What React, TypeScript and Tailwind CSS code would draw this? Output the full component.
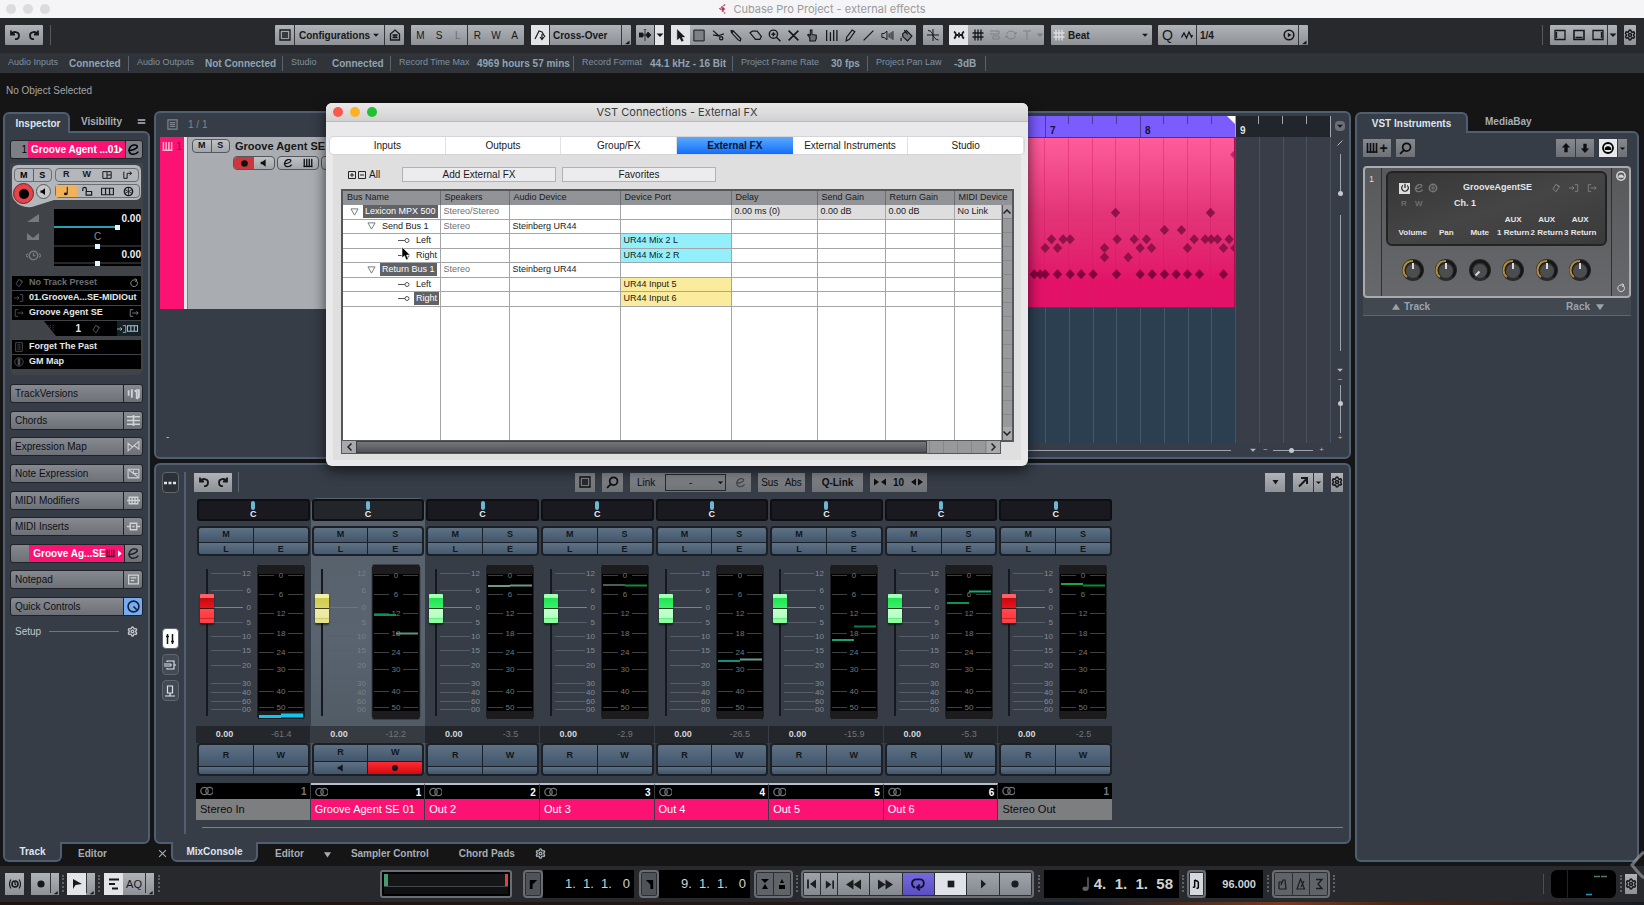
import React, { useState } from "react";
import type { ReactNode } from "react";
import { Settings } from "lucide-react";

const ICONS: Record<string, ReactNode> = {
  undo: <path d="M2 1.5v4h4M2.3 5.3C3.8 2 10 2.2 10 6.4 10 8.8 8.2 10.2 6 10.2" strokeWidth="1.8" />,
  redo: <path d="M10 1.5v4H6M9.7 5.3C8.2 2 2 2.2 2 6.4 2 8.8 3.8 10.2 6 10.2" strokeWidth="1.8" />,
  list: <path d="M1 1h10v10H1zM3 4h6M3 6h6M3 8h6" strokeWidth="1.3" />,
  house: <path d="M1.5 11V5L6 1l4.500 4v6zM3.500 6h5M3.500 8.500h5M5 6v3M7 6v3" strokeWidth="1.3" />,
  node: <path d="M1 10L5 2l3 1 3 5M8 5v5M6 8l2 2.500 2-2.500" strokeWidth="1.2" />,
  scroll: <path d="M0 4h4v4H0zM9 3l3 3-3 3-2-3zM6 0v12M4.500 0h3M0 6h10" fill="currentColor" strokeWidth="0.8" />,
  arrow: <path d="M3 .5v9.500l2.300-2 1.700 3.500 1.700-.8L7 7.300h3z" fill="currentColor" strokeWidth="0.3" />,
  range: <path d="M.8 1h9.500v10H.8z" fill="#7d8085" strokeWidth="0.9" />,
  split: <path d="M1 1.500l5.500 5M1 5.500l6 1M7 8.500a1.500 1.500 0 103 0 1.500 1.500 0 10-3 0M6.500 6L11 4.500" strokeWidth="1.2" />,
  glue: <path d="M1 1.500l2 .2 7 7.300-.5 2L7.500 10 1.500 3.500zM3 1.700L2 3.700" strokeWidth="1.1" />,
  erase: <path d="M1 3.500L3 2h4.500l4 5-1.500 2.500H6z" strokeWidth="1.1" />,
  zoom: <path d="M5 1a3.800 3.800 0 100 7.600A3.800 3.800 0 005 1M8 7.800l3.500 3.500M5 3v3.600M3.200 4.800h3.600" strokeWidth="1.3" />,
  mute: <path d="M1.500 1.500l9 9M10.500 1.500l-9 9" strokeWidth="1.500" />,
  hand: <path d="M3.500 11V8L1.500 5.500l1-.6L4 6V1h1.500v4l4 .8v3L8.500 11z" fill="#6b6e72" strokeWidth="1" />,
  comp: <path d="M1.500 1v10M5 3v8M8 1v10M11 1v10" strokeWidth="1.200" />,
  pencil: <path d="M2 11l.5-3.500L7.500 1l2.500 1.500-5 7z" strokeWidth="1.100" />,
  line: <path d="M1.500 10.500l9-9" strokeWidth="1.100" />,
  play: <path d="M.8 4.200h2L5.500 2v8L2.800 7.800h-2zM7.500 4v4M9.300 3v6M11 2v8" strokeWidth="0.9" />,
  bucket: <path d="M2.500 4.500L6 1.500l5 5-4 4.500-4.500-4zM1 8v3M4 1l3 4" fill="#777a7e" strokeWidth="1.100" />,
  cross: <path d="M6 0v12M0 6h12M1 1.500c3 0 4 2 5 4.500s2 4.500 5.500 5" strokeWidth="1" />,
  snap: <path d="M1 2.500C3.500 4 3.500 8 1 9.500M11 2.500C8.500 4 8.500 8 11 9.500M3 6h2M7 6h2M6 3.500v5" strokeWidth="1.800" />,
  grid: <path d="M3 .5v11M6 .5v11M9 .5v11M.5 4h11M.5 8h11" strokeWidth="1.300" />,
  ghost1: <path d="M1 2h9v3H1M4 7h6v3H4z" />,
  ghost2: <path d="M10.500 5C9 1 3 1 1.500 5M1.500 7c1.500 4 7.500 4 9 0M9 5h2V3M3 7H1v2" />,
  ghost3: <path d="M6 2v9M2 2h8" />,
  iterQ: <path d="M.5 8.500L3 4l2.500 5L8 3l2.500 5 1-2" strokeWidth="1.300" />,
  circPlay: <><circle cx="6" cy="6" r="4.800" strokeWidth="1.600" /><path d="M4.800 3.800v4.400L8.500 6z" fill="currentColor" strokeWidth="0" /></>,
  zoneL: <path d="M1 1.500h10v9H1zM2.500 3v6" strokeWidth="1.300" />,
  zoneB: <path d="M1 1.500h10v9H1zM2.500 8.500h7" strokeWidth="1.600" />,
  zoneR: <path d="M1 1.500h10v9H1zM9.500 3v6" strokeWidth="1.300" />,
  search: <path d="M7 1.200a3.600 3.600 0 100 7.200 3.600 3.600 0 000-7.200M4.500 7.500L1 11" strokeWidth="1.600" />,
  e: <path d="M1 6.800C4 7 9.500 5.500 9.500 3.300 9.500.8 2.500 1 2 6.500c-.3 5 6 5 8.500 1.500" strokeWidth="1.400" />,
  speaker: <path d="M2 4.500h2L8 1.500v9L4 7.500H2z" fill="currentColor" strokeWidth="0" />,
  dot: <circle cx="6" cy="6" r="3.600" fill="currentColor" strokeWidth="0" />,
  down: <path d="M2.500 4.500h7L6 8z" fill="currentColor" strokeWidth="0" />,
  up: <path d="M0 10h12L6 1z" fill="currentColor" strokeWidth="0" />,
  bigDown: <path d="M0 2h12L6 11z" fill="currentColor" strokeWidth="0" />,
  corner: <path d="M10 6v5H4z" fill="currentColor" strokeWidth="0" />,
  right: <path d="M4 1.500v9L9 6z" fill="currentColor" strokeWidth="0" />,
  keys: <path d="M1.500 1v10M4.500 1v10M7.500 1v10M10.500 1v10M.5 10h11" strokeWidth="1.600" />,
  lanes: <path d="M1 2h10v8H1zM6 2v8M6 6h5" strokeWidth="1.200" />,
  route: <path d="M1 2v8h4V4h5M8 2l2.500 2L8 6" strokeWidth="1.200" />,
  note: <path d="M6.500 1v8a2 1.700 0 11-2-1.500" strokeWidth="1.300" fill="none" />,
  noteFill: <><path d="M7.500 1v8.500" strokeWidth="1.200" /><ellipse cx="5.600" cy="9.500" rx="2.200" ry="1.700" fill="currentColor" strokeWidth="0" /></>,
  lock: <path d="M.8 5.500V3.500a2 2 0 014 0V6M4.500 6h6v4h-6z" strokeWidth="1.300" fill="none" />,
  boxes: <path d="M.5 3h11v6H.5zM4.200 3v6M7.900 3v6" strokeWidth="1.100" />,
  freeze: <><circle cx="6" cy="6" r="4.500" strokeWidth="1.600" /><path d="M6 1.500v9M2 3.800l8 4.400M10 3.800L2 8.200" strokeWidth="0.900" /></>,
  ramp: <path d="M0 10h12V2z" fill="currentColor" strokeWidth="0" />,
  pan: <path d="M0 10V3l6 5 6-5v7z" fill="currentColor" strokeWidth="0" />,
  clock: <><circle cx="6" cy="6" r="3.400" strokeWidth="1.200" /><path d="M6 4v2h1.500M1.500 4.500L0 6l1.500 1.500M10.500 4.500L12 6l-1.500 1.500" /></>,
  diamond: <path d="M6 1.500L9.500 5 6 10.500 2.500 7zM8 2l2.500 3" strokeWidth="1.100" />,
  inIcon: <path d="M0 6h6M4 4l2 2-2 2M7 2h3.500v8H7" />,
  outIcon: <path d="M5 2H1.500v8H5M4 6h7M9 4l2 2-2 2" />,
  reload: <path d="M9 3.500a4 4 0 11-3-1.200h3M7.500.5L9.500 2.500 7.500 4.500" strokeWidth="1.200" />,
  prog: <path d="M2 2h1M5.500 2h1M9 2h1M2 5h1M5.500 5h1M9 5h1M2 8h1M5.500 8h1M9 8h1" strokeWidth="1.600" />,
  doc: <path d="M2 .8h8v10.400H2zM4 3.500h4M4 6h4M4 8.500h4" />,
  mapIcon: <><circle cx="6" cy="6" r="5" /><path d="M5 2.500h2v7H5z" fill="currentColor" /></>,
  versions: <path d="M1.500 3v5M4.500 2v8M7 4l2-1v8M11 2v7L9 11" strokeWidth="1.700" />,
  chords: <path d="M0 2.500h12M0 6h12M0 9.500h12M6 1v10" strokeWidth="1.500" />,
  expr: <path d="M1 3v7l4-3.500zM11 1.500v7L6.500 5zM5 6.500L7 5" strokeWidth="1" />,
  noteExpr: <path d="M1 2h10v8H1zM2 3l8 6M6 3v3h4" strokeWidth="1" />,
  mod: <path d="M2 3h8v6H2zM0 6h12M4.700 3v6M7.400 3v6" strokeWidth="1.200" />,
  insert: <path d="M3 3h6v6H3zM0 6h3M9 6h3M5 6h2" strokeWidth="1.300" />,
  pad: <path d="M1.500 2h9v8h-9zM3.500 4.500h5M3.500 7h3" strokeWidth="1.200" />,
  knob: <><circle cx="6" cy="6" r="5" strokeWidth="1.500" /><path d="M6 6l3 3" strokeWidth="1.500" /></>,
  dots3: <path d="M0 6h3M4.500 6h3M9 6h3" strokeWidth="2.600" />,
  faders: <path d="M3.500 1v10M8.500 1v10M2 3.500h3M7 8.500h3" strokeWidth="1.500" />,
  channel: <path d="M3 3V2h7v8H3V9M0 5h7M0 7h7M7 5v2M10 6h2" strokeWidth="1.100" />,
  monitor: <path d="M3.500 1h5v7h-5zM6 8v3M1 11h10" strokeWidth="1.200" />,
  rings: <><circle cx="4.500" cy="6" r="3.700" strokeWidth="1.300" /><circle cx="9.500" cy="6" r="3.700" strokeWidth="1.300" /></>,
  outLeft: <path d="M0 2.500v7L5 6zM12 2.500v7L7 6z" fill="currentColor" strokeWidth="0" />,
  inOut: <path d="M5 2.500v7L0 6zM7 2.500v7L12 6z" fill="currentColor" strokeWidth="0" />,
  ne: <path d="M2 10.500l7-7M4 2h6v6" strokeWidth="2" />,
  arrowUp: <path d="M6 0l5 5.500H8V11H4V5.500H1z" fill="currentColor" strokeWidth="0" />,
  arrowDown: <path d="M6 12L1 6.500h3V1h4v5.500h3z" fill="currentColor" strokeWidth="0" />,
  dome: <><circle cx="6" cy="6" r="5" strokeWidth="1.800" /><path d="M3 7.500a3 2.800 0 016 0z" fill="currentColor" /></>,
  power: <path d="M6 1v5M3.500 2.800a4 4 0 105 0" strokeWidth="1.400" />,
  slash: <path d="M1 11L11 1" strokeWidth="2" />,
  equal: <path d="M1 4h10M1 8h10" strokeWidth="2" />,
  stretch: <path d="M1 1.500h10M1 6h6M4 10.500h6" strokeWidth="2.200" />,
  wedge: <path d="M2 1v10L4.500 7 11 6z" fill="currentColor" strokeWidth="0" />,
  meterClock: <><circle cx="6" cy="6" r="3" strokeWidth="1.600" /><path d="M2 1.500C0 4 0 8 2 10.500M10 1.500c2 2.500 2 6.500 0 9M6 4v2l1 1" strokeWidth="1.200" /></>,
  locL: <path d="M2 1h8L5 6v5H2z" fill="currentColor" strokeWidth="0" />,
  locR: <path d="M10 1H2l5 5v5h3z" fill="currentColor" strokeWidth="0" />,
  punchA: <path d="M2 1h8L6 5zM6 6l3 5H3z" fill="currentColor" strokeWidth="0" />,
  punchB: <path d="M6 1l2 4H4zM3 7h6v4H3z" fill="currentColor" strokeWidth="0" />,
  toStart: <path d="M2 1.500v9" strokeWidth="2" />,
  prev: <><path d="M2 1.500v9" strokeWidth="1.800" /><path d="M10 1.500v9L4 6z" fill="currentColor" strokeWidth="0" /></>,
  next: <><path d="M10 1.500v9" strokeWidth="1.800" /><path d="M2 1.500v9L8 6z" fill="currentColor" strokeWidth="0" /></>,
  rew: <path d="M6 2v8L0 6zM12 2v8L6 6z" fill="currentColor" strokeWidth="0" />,
  ffw: <path d="M0 2v8l6-4zM6 2v8l6-4z" fill="currentColor" strokeWidth="0" />,
  cycle: <path d="M3.500 9C0 8 0 2.500 4 2h4c4 .5 4 6 0 7H6M7.500 6.500L5 9l2.500 2.500" strokeWidth="1.600" />,
  stop: <path d="M2 2h8v8H2z" fill="currentColor" strokeWidth="0" />,
  clickA: <path d="M2 11h7L8 2H6L4 7M2 4v7M2 4h3" strokeWidth="1.200" />,
  clickB: <path d="M2 11L5.500 1l4 10zM6 9l3-6" strokeWidth="1.200" />,
  clickC: <path d="M3 1.500h6L5 6l4 4.500H3" strokeWidth="1.300" />,
  tempo: <path d="M4 1v8M8 3v7M4 1l4 2M2 9h2M6 10h2" strokeWidth="1.600" />,
};

function Icon({ n, className = "size-3" }: { n: string; className?: string }) {
  return (
    <svg viewBox="0 0 12 12" fill="none" stroke="currentColor" className={`shrink-0 ${className}`} aria-hidden="true">
      {ICONS[n]}
    </svg>
  );
}

const METAL = "bg-gradient-to-b from-[#b0b3b8] to-[#8e9196] text-[#17181a]";
const DARKMETAL = "bg-gradient-to-b from-[#85888d] to-[#6e7176] text-[#0e0f11]";

function Tool({ n, w = "w-[19px]", on = false, dim = false, label }: { n: string; w?: string; on?: boolean; dim?: boolean; label: string }) {
  return (
    <button aria-label={label} className={`flex h-full items-center justify-center ${w} ${on ? "bg-[#e2e4e7]" : ""} ${dim ? "text-[#7d8084]" : ""}`}>
      <Icon n={n} />
    </button>
  );
}

function Group({ children, className = "" }: { children: ReactNode; className?: string }) {
  return <div className={`flex h-5 shrink-0 items-center overflow-hidden rounded-[1px] ${METAL} ${className}`}>{children}</div>;
}

const Sep = () => <i className="h-5 w-px shrink-0 bg-[#34373b]" />;

const TOOLS = ["arrow", "range", "split", "glue", "erase", "zoom", "mute", "hand", "comp", "pencil", "line", "play", "bucket"];

function Toolbar() {
  return (
    <div className="flex h-[35px] shrink-0 items-center gap-[7px] bg-[#27292d] pr-2 pl-[5px] pb-[5px] pt-[4px] text-[10px]">
      <Group className="w-[38px] justify-around">
        <Tool n="undo" label="Undo" />
        <Tool n="redo" label="Redo" />
      </Group>
      <i className="h-5 w-px bg-[#55585c]" />
      <Group className="ml-[217px] w-[129px]">
        <Tool n="list" label="Window layout" />
        <Sep />
        <select aria-label="Configurations" className="h-full w-[76px] appearance-none pl-1 font-bold">
          <option>Configurations</option>
        </select>
        <Icon n="down" className="size-[10px]" />
        <i className="flex-1" />
        <Sep />
        <Tool n="house" label="Track versions" />
      </Group>
      <Group className="w-[113px] font-medium">
        {["M", "S", "L"].map((t) => (
          <button key={t} className={`flex-1 ${t === "L" ? "text-[#6d7074]" : ""}`}>{t}</button>
        ))}
        <Sep />
        {["R", "W", "A"].map((t) => (
          <button key={t} className="flex-1">{t}</button>
        ))}
      </Group>
      <Group className="w-[100px]">
        <Tool n="node" on label="Automation panel" w="w-[18px]" />
        <Sep />
        <select aria-label="Automation mode" className="h-full flex-1 appearance-none pl-[3px] font-bold">
          <option>Cross-Over</option>
        </select>
        <Sep />
        <Icon n="corner" className="size-[9px] self-end" />
      </Group>
      <Group className="-ml-[2px] w-[28px]">
        <Tool n="scroll" label="Auto-scroll" />
        <Sep />
        <Tool n="down" on w="w-[9px]" label="Auto-scroll options" />
      </Group>
      <Group className="w-[245px]">
        {TOOLS.map((t, i) => (
          <button key={t} aria-label={t} className={`flex h-full flex-1 items-center justify-center ${i === 0 ? "bg-[#e2e4e7]" : ""}`}>
            <Icon n={t} className="size-[13px]" />
          </button>
        ))}
      </Group>
      <Group className="w-5 justify-center">
        <Tool n="cross" label="Crosshair" />
      </Group>
      <Group className="-ml-[1px] w-[95px]">
        <Tool n="snap" on label="Snap" />
        <Tool n="grid" label="Grid" />
        <Tool n="ghost1" dim label="Grid relative" w="w-4" />
        <Tool n="ghost2" dim label="Snap type" w="w-4" />
        <Tool n="ghost3" dim label="Snap point" w="w-4" />
        <Tool n="down" dim label="Snap options" w="w-[9px]" />
      </Group>
      <Group className="w-[101px] px-[2px]">
        <span className="text-[#dcdee0]"><Icon n="grid" /></span>
        <select aria-label="Grid type" className="h-full flex-1 appearance-none pl-[3px] font-bold">
          <option>Beat</option>
        </select>
        <Icon n="down" className="size-[10px]" />
      </Group>
      <Group className="-ml-px w-[150px]">
        <button className="w-[19px] text-[14px] leading-5">Q</button>
        <Tool n="iterQ" label="Iterative quantize" />
        <Sep />
        <select aria-label="Quantize preset" className="h-full flex-1 appearance-none pl-[3px] font-bold">
          <option>1/4</option>
        </select>
        <Tool n="circPlay" label="Apply quantize" />
        <Sep />
        <Icon n="corner" className="size-[9px] self-end" />
      </Group>
      <i className="ml-auto h-5 w-px bg-[#55585c]" />
      <Group className="w-[67px]">
        <Tool n="zoneL" label="Left zone" />
        <Tool n="zoneB" label="Lower zone" />
        <Tool n="zoneR" label="Right zone" />
        <Sep />
        <Tool n="down" w="w-[9px]" label="Zones menu" />
      </Group>
      <Group className="w-3 justify-center">
        <Settings className="size-3" strokeWidth={3} />
      </Group>
    </div>
  );
}

const INFO: [string, string, string, string][] = [
  ["Audio Inputs", "Connected", "w-[61px]", "w-[59px]"],
  ["Audio Outputs", "Not Connected", "w-[68px]", "w-[77px]"],
  ["Studio", "Connected", "w-[41px]", "w-[58px]"],
  ["Record Time Max", "4969 hours 57 mins", "w-[78px]", "w-[96px]"],
  ["Record Format", "44.1 kHz - 16 Bit", "w-[68px]", "w-[82px]"],
  ["Project Frame Rate", "30 fps", "w-[90px]", "w-[36px]"],
  ["Project Pan Law", "-3dB", "w-[78px]", "w-[31px]"],
];

function InfoBar() {
  return (
    <dl className="flex h-5 shrink-0 items-center bg-[#303438] text-[#7d91a3] whitespace-nowrap">
      {INFO.map(([k, v, kw, vw]) => (
        <div key={k} className="flex h-[15px] items-center border-r border-[#566370] pl-2">
          <dt className={`text-[9px] ${kw}`}>{k}</dt>
          <dd className={`text-[10px] font-semibold text-[#8ea3b5] ${vw}`}>{v}</dd>
        </div>
      ))}
    </dl>
  );
}

const H_RANGE =
  "block h-[6px] w-full appearance-none bg-[linear-gradient(to_bottom,transparent_2px,#25272a_2px,#25272a_4px,transparent_4px)] [&::-webkit-slider-thumb]:h-[5px] [&::-webkit-slider-thumb]:w-[5px] [&::-webkit-slider-thumb]:appearance-none [&::-webkit-slider-thumb]:bg-[#dff6ff]";

const SECTIONS: [string, string][] = [
  ["TrackVersions", "versions"],
  ["Chords", "chords"],
  ["Expression Map", "expr"],
  ["Note Expression", "noteExpr"],
  ["MIDI Modifiers", "mod"],
  ["MIDI Inserts", "insert"],
  ["*", "e"],
  ["Notepad", "pad"],
  ["Quick Controls", "knob"],
];

function SectionHead({ name, icon }: { name: string; icon: string }) {
  const e = "flex w-[19px] items-center justify-center border-l border-[#1f2226]";
  return (
    <div className="flex h-[19px] overflow-hidden rounded-[3px] border border-[#1f2226] bg-gradient-to-b from-[#868a90] to-[#6d7177]">
      {name === "*" ? (
        <>
          <span className="w-[19px]" />
          <button className="flex flex-1 items-center bg-[#fb1272] pl-1 text-left text-[10px] font-bold whitespace-nowrap text-white">
            Groove Ag...SE
            <Icon n="keys" className="size-[9px] text-[#5a0a2c]" />
            <Icon n="right" className="ml-auto size-[9px]" />
          </button>
        </>
      ) : (
        <button className="flex-1 pl-1 text-left text-[10px] text-[#0e0f11]">{name}</button>
      )}
      <button aria-label={`${name} options`} className={`${e} ${icon === "knob" ? "bg-[#78abf0] text-[#12233a]" : icon === "e" ? "text-[#222]" : "text-[#cfd2d6]"}`}>
        <Icon n={icon} className="size-[13px]" />
      </button>
    </div>
  );
}

function Row({ l, text, r, dim }: { l: string; text: string; r?: string; dim?: boolean }) {
  return (
    <div className="flex h-[14px] items-center bg-black px-[2px] text-[9px] font-bold whitespace-nowrap">
      <Icon n={l} className="size-[10px] text-[#55585c]" />
      <span className={`flex-1 pl-[5px] ${dim ? "text-[#6b6e72]" : "text-[#e6e8ea]"}`}>{text}</span>
      {r && <Icon n={r} className="size-[10px] text-[#8a8d91]" />}
    </div>
  );
}

function Inspector() {
  const plateBtn = "flex h-[13px] flex-1 items-center justify-center text-[#1a1b1d]";
  return (
    <aside className="flex w-[147px] shrink-0 flex-col">
      <div className="flex h-5 shrink-0 items-end text-[10px] font-bold">
        <button className="relative -mb-[2px] h-[21px] w-[67px] rounded-t-md border-2 border-b-0 border-[#4f5e70] bg-[#363d47] pl-[3px] text-[#dce6f0]">Inspector</button>
        <button className="h-5 pl-[11px] text-[#a6adb5]">Visibility</button>
        <Icon n="equal" className="mb-[5px] ml-auto mr-1 size-[9px] text-[#b5bbc2]" />
      </div>
      <div className="flex flex-1 flex-col rounded-tr-md rounded-br-md border-2 border-[#4f5e70] bg-[#363d47] px-[5px] pt-[7px]">
        <div className="flex h-[19px] shrink-0 overflow-hidden rounded-[3px] border border-[#1f2226] bg-[#7c8086]">
          <span className="w-[19px] pr-px text-right text-[10px] leading-[17px]">1</span>
          <button className="flex flex-1 items-center bg-[#fb1272] pl-[3px] text-[10px] font-bold whitespace-nowrap text-white">
            Groove Agent ...01
            <Icon n="right" className="-ml-[3px] size-[9px]" />
          </button>
          <button aria-label="Edit instrument" className="flex w-[19px] items-center justify-center border-l border-[#1f2226]"><Icon n="e" className="size-[13px]" /></button>
        </div>
        <div className="mt-1 rounded-b-md bg-[#404348] px-[2px] pt-[2px] pb-[6px]">
          <div className="relative h-[43px]">
            <svg viewBox="0 0 129 43" className="absolute inset-0 size-full" aria-hidden="true">
              <path d="M6 0h117q6 0 6 6v23q0 6-6 6H42L20 42Q8 43 3 36 0 33 0 28V6Q0 0 6 0" fill="#b3b6ba" />
            </svg>
            <div className="relative flex gap-[3px] px-[2px] pt-[3px]">
              <div className="flex h-[14px] w-[38px] shrink-0 divide-x divide-[#5a5d61] rounded-sm border border-[#6b6e72] text-[9px] font-black">
                <button className="flex-1 leading-3">M</button>
                <button className="flex-1 leading-3">S</button>
              </div>
              <div className="flex-1 rounded-sm border border-[#6b6e72] text-[9px] font-black">
                <div className="flex h-3 items-center">
                  <button className={plateBtn}>R</button>
                  <button className={plateBtn}>W</button>
                  <button aria-label="Lanes" className={plateBtn}><Icon n="lanes" className="size-[10px]" /></button>
                  <button aria-label="Routing" className={plateBtn}><Icon n="route" className="size-[10px]" /></button>
                </div>
              </div>
            </div>
            <div className="relative flex items-start px-[1px] pt-[2px]">
              <button aria-label="Record enable" className="-mt-px flex size-[21px] items-center justify-center rounded-full border border-[#702227] bg-[#e5434a]"><i className="size-[10px] rounded-full bg-black" /></button>
              <button aria-label="Monitor" className="ml-[2px] flex size-[15px] items-center justify-center rounded-full border border-[#55585c] bg-[#c4c6c9]"><Icon n="speaker" className="size-[9px]" /></button>
              <div className="ml-[4px] flex h-[14px] flex-1 items-center rounded-sm border border-[#6b6e72]">
                <button aria-label="Musical mode" className={`${plateBtn} h-full bg-[#f0b35c]`}><Icon n="noteFill" className="size-[10px]" /></button>
                <button aria-label="Lock" className={plateBtn}><Icon n="lock" className="size-[11px]" /></button>
                <button aria-label="Lane display" className={plateBtn}><Icon n="boxes" className="size-[13px]" /></button>
                <button aria-label="Freeze" className={plateBtn}><Icon n="freeze" className="size-[11px]" /></button>
              </div>
            </div>
          </div>
          <div className="mt-[1px] flex">
            <div className="flex w-[42px] flex-col items-center justify-around text-[#77797d]">
              <Icon n="ramp" className="size-3" />
              <Icon n="pan" className="size-3" />
              <Icon n="clock" className="size-[15px]" />
            </div>
            <div className="flex-1 bg-black text-[10px] font-bold text-[#eceef0]">
              <div className="h-[15px] pt-[2px] text-right leading-4">0.00</div>
              <input type="range" aria-label="Volume" defaultValue={74} className={`${H_RANGE} bg-[linear-gradient(to_right,#2d9db5_73%,transparent_73%)] bg-[length:100%_2px] bg-no-repeat bg-[position:0_2px]`} />
              <div className="h-[13px] text-center leading-[14px] font-normal text-[#8b8e92]">C</div>
              <input type="range" aria-label="Pan" defaultValue={50} className={H_RANGE} />
              <div className="h-[11px] text-right leading-[11px]">0.00</div>
              <input type="range" aria-label="Delay" defaultValue={50} className={H_RANGE} />
            </div>
          </div>
          <div className="mt-[10px] flex flex-col gap-px">
            <Row l="diamond" text="No Track Preset" r="reload" dim />
            <Row l="inIcon" text="01.GrooveA...SE-MIDIOut" />
            <Row l="outIcon" text="Groove Agent SE" r="outIcon" />
            <div className="ml-[32px] flex h-[15px] items-center justify-end bg-black text-[10px] font-bold text-[#e6e8ea] [clip-path:polygon(0_0,100%_0,100%_100%,12px_100%)]">
              <Icon n="prog" className="mr-[20px] size-[9px] text-[#5b5e62]" />1
              <Icon n="diamond" className="mr-4 ml-[10px] size-[10px] text-[#5b5e62]" />
              <span className="flex h-full w-[24px] items-center bg-[#152027] text-[#a8c3cf]">
                <Icon n="inIcon" className="size-[10px]" />
                <Icon n="boxes" className="size-[11px]" />
              </span>
            </div>
          </div>
          <div className="mt-1 flex flex-col gap-px">
            <Row l="doc" text=" Forget The Past" />
            <Row l="mapIcon" text="GM Map" />
          </div>
        </div>
        <div className="mt-[9px] flex h-[232px] flex-col justify-between">
          {SECTIONS.map(([n, i]) => (
            <SectionHead key={n} name={n} icon={i} />
          ))}
        </div>
        <div className="mt-2 flex items-center gap-2 px-[5px] text-[10px] text-[#c3c8ce]">
          Setup
          <i className="h-px flex-1 bg-[#6f7780]" />
          <Settings className="size-[11px]" strokeWidth={3} />
        </div>
      </div>
      <div className="flex h-[18px] shrink-0 items-start text-[10px] font-bold">
        <button className="relative -mt-[2px] h-5 w-[59px] rounded-b-md border-2 border-t-0 border-[#4f5e70] bg-[#363d47] text-[#dce6f0]">Track</button>
        <button className="h-[18px] pl-4 text-[#a6adb5]">Editor</button>
      </div>
    </aside>
  );
}

const V_RANGE =
  "w-[9px] appearance-none [writing-mode:vertical-lr] bg-[linear-gradient(to_right,transparent_4px,#9da3ab_4px,#9da3ab_5px,transparent_5px)] [&::-webkit-slider-thumb]:size-[5px] [&::-webkit-slider-thumb]:appearance-none [&::-webkit-slider-thumb]:rounded-full [&::-webkit-slider-thumb]:bg-[#c4c9cf]";

const NOTES: [number, number][] = [
  [289, 324], [574, 324], [436, 376], [487, 376],
  [97, 404], [132, 404], [153, 404], [294, 404], [345, 404], [382, 404], [525, 404], [558, 404], [576, 404], [595, 404], [630, 404],
  [78, 430], [115, 430], [256, 430], [363, 430], [397, 430], [505, 430], [613, 430], [647, 430],
  [256, 458], [327, 458], [647, 150],
  [45, 509], [63, 509], [78, 509], [115, 509], [153, 509], [186, 509], [222, 509], [292, 509], [363, 509], [399, 509],
  [436, 509], [471, 509], [505, 509], [541, 509], [613, 509],
];

function Beats({ cls, n = 4 }: { cls: string; n?: number }) {
  return (
    <div className="grid h-full w-[95px] shrink-0 grid-cols-4">
      {Array.from({ length: n }, (_, i) => (
        <i key={i} className={`border-l ${cls}`} />
      ))}
    </div>
  );
}

function RulerBar({ n, light }: { n: number; light?: boolean }) {
  const c = light ? "border-[#a5a9ae]" : "border-[#4a3a9c]";
  return (
    <div className={`flex h-full w-[95px] shrink-0 border-l ${c}`}>
      <span className={`w-[22px] self-end pl-1 text-[10px] font-bold leading-[13px] ${light ? "text-[#dfe2e5]" : "text-[#15103a]"}`}>{n}</span>
      <div className="grid h-2 flex-1 grid-cols-3">
        {[0, 1, 2].map((i) => (
          <i key={i} className={`border-l ${c}`} />
        ))}
      </div>
    </div>
  );
}

function Arrange() {
  const small = "flex h-[14px] items-center rounded-sm border border-[#54575b] bg-gradient-to-b from-[#c0c3c6] to-[#a3a6aa] text-[#111]";
  return (
    <section className="flex min-h-0 flex-1 flex-col rounded-md border-2 border-[#4f5e70] bg-[#363d47] pt-[3px]">
      <div className="flex min-h-0 flex-1">
        <div className="flex w-[420px] shrink-0 flex-col pl-1">
          <div className="flex h-[21px] items-center gap-[10px] pt-[-2px] pb-1 pl-[7px] text-[10px] text-[#80868d]">
            <Icon n="list" className="size-[11px]" />1 / 1
          </div>
          <div className="flex h-[172px] shrink-0 bg-[#a9adb1]">
            <div className="flex w-6 justify-between bg-[#fb1272] p-[2px] pt-1 text-[10px] leading-3 text-[#8e0a41]">
              <Icon n="keys" className="size-[11px] text-[#ffb6d3]" />1
            </div>
            <i className="w-[3px] bg-[#e3e6e8]" />
            <i className="w-px bg-[#7d8185]" />
            <div className="pl-1 pt-[2px]">
              <div className="flex items-center gap-[5px]">
                <div className={`${small} w-[38px] divide-x divide-[#54575b] text-[9px] font-black`}>
                  <button className="flex-1">M</button>
                  <button className="flex-1">S</button>
                </div>
                <span className="text-[11px] font-bold leading-[14px] text-[#15171a]">Groove Agent SE</span>
              </div>
              <div className="mt-[3px] ml-[41px] flex gap-[2px]">
                <div className={`${small} w-[42px] overflow-hidden`}>
                  <button aria-label="Record enable" className="flex h-full w-5 items-center justify-center bg-[#c9373f]"><Icon n="dot" className="size-[11px]" /></button>
                  <button aria-label="Monitor" className="flex flex-1 justify-center"><Icon n="speaker" className="size-[10px]" /></button>
                </div>
                <div className={`${small} w-[42px] justify-around`}>
                  <Icon n="e" className="size-[10px]" />
                  <Icon n="keys" className="size-[10px]" />
                </div>
                <div className={`${small} w-[60px]`} />
              </div>
            </div>
          </div>
          <span className="mt-auto pl-[6px] text-[10px] leading-3 text-[#b9bec4]">-</span>
        </div>
        <div className="flex min-w-0 flex-1 flex-col overflow-hidden">
          <div className="flex h-[21px] shrink-0">
            <div className="relative flex h-full min-w-0 flex-1 justify-end overflow-hidden bg-[#7b5cff]">
              <RulerBar n={7} />
              <RulerBar n={8} />
              <svg viewBox="0 0 8 8" className="absolute top-0 right-0 size-2" aria-hidden="true"><path d="M0 0h8v8z" fill="#fff" /></svg>
            </div>
            <div className="flex h-full w-24 bg-[#22252b]"><RulerBar n={9} light /><i className="h-full w-px bg-[#a5a9ae]" /></div>
          </div>
          <div className="flex min-h-0 flex-1">
            <div className="flex min-w-0 flex-1 flex-col overflow-hidden">
              <div className="relative flex h-[171px] shrink-0 justify-end border border-[#a80f4c] bg-gradient-to-b from-[#ff5c9a] via-[#e23478] via-45% to-[#e31268] to-85%">
                <Beats cls="border-[#d01a62]/40" />
                <Beats cls="border-[#d01a62]/40" />
                <svg viewBox="21 100 623 510" className="absolute top-0 right-0 h-[170px] w-[208px]" aria-label="MIDI notes">
                  {NOTES.map(([x, y]) => (
                    <path key={`${x}-${y}`} d={`M${x} ${y - 15}l14 15-14 15-14-15z`} fill={y > 500 ? "#7d003c" : "#8c1048"} fillOpacity={y < 200 ? 0.6 : 0.95} />
                  ))}
                </svg>
              </div>
              <div className="flex min-h-0 flex-1 justify-end bg-[#2c3f50]">
                <Beats cls="border-[#44586a]" />
                <Beats cls="border-[#44586a]" />
              </div>
            </div>
            <div className="flex w-24 bg-[#383d47]"><Beats cls="border-[#4b525d]" /><i className="w-px bg-[#4b525d]" /></div>
          </div>
        </div>
        <div className="flex w-[18px] shrink-0 flex-col items-center text-[#b4b9bf]">
          <button aria-label="Ruler menu" className="mt-[5px] flex size-[10px] items-center justify-center rounded-sm bg-[#6c7178] text-[#15171a]"><Icon n="down" className="size-[10px]" /></button>
          <Icon n="slash" className="mt-[9px] size-[6px]" />
          <input type="range" aria-label="Track zoom" defaultValue={100} className={`${V_RANGE} mt-2 h-[42px]`} />
          <i className="mt-[19px] w-px flex-1 bg-[#9da3ab]" />
          <Icon n="down" className="mt-[14px] size-[10px]" />
          <span className="text-[8px] leading-[10px]">−</span>
          <input type="range" aria-label="Vertical zoom" defaultValue={38} className={`${V_RANGE} h-[48px]`} />
          <span className="text-[8px] leading-[10px]">+</span>
        </div>
      </div>
      <div className="flex h-[14px] shrink-0 items-center pl-[420px] text-[8px] text-[#b4b9bf]">
        <i className="h-px flex-1 bg-[#9da3ab]" />
        <Icon n="down" className="mr-[5px] ml-[17px] size-[10px]" />
        <span className="w-[10px]">−</span>
        <input type="range" aria-label="Horizontal zoom" defaultValue={46} className="h-[5px] w-[40px] appearance-none bg-[linear-gradient(to_bottom,transparent_2px,#9da3ab_2px,#9da3ab_3px,transparent_3px)] [&::-webkit-slider-thumb]:size-[5px] [&::-webkit-slider-thumb]:appearance-none [&::-webkit-slider-thumb]:rounded-full [&::-webkit-slider-thumb]:bg-[#c4c9cf]" />
        <span className="mr-[25px] ml-[6px]">+</span>
      </div>
    </section>
  );
}

const FADER_SCALE: [string, number][] = [
  ["12", 14], ["6", 31], ["0", 48], ["5", 63], ["10", 77], ["15", 91], ["20", 106], ["30", 124], ["40", 133], ["60", 142], ["00", 150],
];
const METER_SCALE: [string, number][] = [
  ["0", 16], ["6", 35], ["12", 54], ["18", 74], ["24", 93], ["30", 110], ["40", 132], ["50", 148],
];

type Strip = { name: string; num: string; peak: string; cap: "red" | "yellow" | "green"; l: number; r: number; lc: string; rc: string; sel?: boolean; bus?: boolean; noSolo?: boolean };
const STRIPS: Strip[] = [
  { name: "Stereo In", num: "1", peak: "-61.4", cap: "red", l: 157, r: 156, lc: "#12c4ee", rc: "#12c4ee", bus: true, noSolo: true },
  { name: "Groove Agent SE 01", num: "1", peak: "-12.2", cap: "yellow", l: 56, r: 75, lc: "#0c8f5c", rc: "#5f9384", sel: true },
  { name: "Out 2", num: "2", peak: "-3.5", cap: "green", l: 27, r: 27, lc: "#6d9a86", rc: "#6d9a86" },
  { name: "Out 3", num: "3", peak: "-2.9", cap: "green", l: 26, r: 27, lc: "#4c5f55", rc: "#128a3c" },
  { name: "Out 4", num: "4", peak: "-26.5", cap: "green", l: 102, r: 101, lc: "#13907e", rc: "#6d9a90" },
  { name: "Out 5", num: "5", peak: "-15.9", cap: "green", l: 81, r: 68, lc: "#17a275", rc: "#0c7a4c" },
  { name: "Out 6", num: "6", peak: "-5.3", cap: "green", l: 44, r: 33, lc: "#0e944e", rc: "#15a878" },
  { name: "Stereo Out", num: "1", peak: "-2.5", cap: "red", l: 25, r: 27, lc: "#18a83c", rc: "#0f8a34", bus: true },
];

const CAP = {
  red: "[&::-webkit-slider-thumb]:bg-[linear-gradient(to_bottom,#ff6166_0,#ff6166_4px,#c40a10_4px,#e8141c_14px,#4b0507_14px,#4b0507_15px,#ff4a50_15px,#ff3a40_24px,#a3070c_24px,#ff4046_25px)]",
  yellow: "[&::-webkit-slider-thumb]:bg-[linear-gradient(to_bottom,#f2f0a2_0,#f2f0a2_4px,#cfcb4e_4px,#d9d56a_14px,#3f3e14_14px,#3f3e14_15px,#eeeba6_15px,#ebe89c_24px,#b3af48_24px,#e5e28e_25px)]",
  green: "[&::-webkit-slider-thumb]:bg-[linear-gradient(to_bottom,#a6ffb6_0,#a6ffb6_4px,#1fe552_4px,#3df06a_14px,#0b4519_14px,#0b4519_15px,#c6ffd0_15px,#b4ffc2_24px,#3ddf62_24px,#8cffa0_25px)]",
};

function Cells({ items, h }: { items: ReactNode[]; h: string }) {
  return (
    <div className={`mx-px grid grid-cols-2 gap-px overflow-hidden rounded-[4px] border-2 border-[#1b2027] bg-[#1b2027] text-[9px] font-bold text-[#12161b] ${h}`}>
      {items.map((t, i) => (
        <button key={i} aria-label={`Channel control ${i + 1}`} className={`flex items-center justify-center ${t === "rec" ? "bg-gradient-to-b from-[#ff2a32] to-[#d3070f]" : "bg-gradient-to-b from-[#5e7184] to-[#42566c]"}`}>
          {t === "rec" ? <Icon n="dot" className="size-[10px]" /> : t}
        </button>
      ))}
    </div>
  );
}

function ChannelStrip({ s }: { s: Strip }) {
  return (
    <article className="flex flex-col">
      <div className={`rounded-md pt-px ${s.sel ? "bg-gradient-to-b from-[#56606b] via-[#5a6470] to-[#4d5761]" : ""}`}>
        <div className={`mx-px flex h-[22px] flex-col items-center rounded-[3px] border-2 border-[#0e0f12] ${s.sel ? "bg-[#22262b]" : "bg-[#19191f]"}`}>
          <i className="h-[10px] w-1 rounded-sm bg-[#6cb6d6]" />
          <span className="text-[9px] leading-[9px] font-bold text-[#e9ecef]">C</span>
        </div>
        <div className="h-[5px]" />
        <Cells h="h-[30px]" items={["M", s.noSolo ? "" : "S", "L", "E"]} />
        <div className="relative mt-[3px] h-[167px]">
          <svg viewBox="0 0 114 167" className="h-[167px] w-[114px]" aria-hidden="true">
            {FADER_SCALE.map(([t, y]) => (
              <g key={t}>
                <path d={`M15 ${y + 0.5}H${t.length > 1 ? 45 : 47}`} stroke={t === "0" ? "#7a828c" : "#565e69"} strokeOpacity={s.sel ? 0.6 : 1} />
                <text x="55" y={y + 3} textAnchor="end" fontSize="8" fill="#848c96" opacity={s.sel ? 0.7 : 1}>{t}</text>
              </g>
            ))}
            <rect x="61" y="5.500" width="48" height="155" rx="3" fill="#000" stroke="#3c3f44" />
            <rect x="62" y="6" width="46" height="9" fill="#1c1c1e" />
            <rect x="62" y="152" width="46" height="8" fill="#1c1c1e" />
            {METER_SCALE.map(([t, y]) => (
              <g key={t}>
                <path d={`M63 ${y + 0.5}H78M92 ${y + 0.5}H107`} stroke="#3d3f42" />
                <text x="85" y={y + 3} textAnchor="middle" fontSize="8" fill="#74777b">{t}</text>
              </g>
            ))}
            <rect x="63" y={s.l - 1} width="22" height={s.l > 150 ? 160 - s.l : 2} fill={s.lc} />
            <rect x="85" y={s.r - 1.500} width="22" height={s.r > 150 ? 160 - s.r : 2} fill={s.rc} />
          </svg>
          <input
            type="range"
            aria-label={`${s.name} level`}
            defaultValue={21}
            className={`absolute top-[10px] left-1 h-[147px] w-[14px] appearance-none [writing-mode:vertical-lr] bg-[linear-gradient(to_right,transparent_6px,#15181c_6px,#15181c_8px,transparent_8px)] [&::-webkit-slider-thumb]:h-[29px] [&::-webkit-slider-thumb]:w-[14px] [&::-webkit-slider-thumb]:appearance-none [&::-webkit-slider-thumb]:rounded-[1px] [&::-webkit-slider-thumb]:shadow-[0_2px_2px_#0008] ${CAP[s.cap]}`}
          />
        </div>
        <div className={`grid h-[17px] grid-cols-2 items-center border-r border-[#363d47] text-center text-[9px] ${s.sel ? "bg-[#363b41]" : "bg-[#23262b]"}`}>
          <span className="font-bold text-[#d5d8db]">0.00</span>
          <span className="text-[#70757b]">{s.peak}</span>
        </div>
        <Cells h="h-[33px]" items={["R", "W", s.sel ? <Icon n="speaker" className="size-[10px]" /> : "", s.sel ? "rec" : ""]} />
      </div>
      <div className={`mt-[7px] flex h-4 items-center justify-between border-r border-[#363d47] bg-black px-[3px] text-[10px] font-bold ${s.bus ? "text-[#777a7e]" : "border-t-2 border-t-[#b7c0ca] text-white"}`}>
        <Icon n="rings" className="h-3 w-[14px] text-[#6f7276]" />
        {s.num}
      </div>
      <div className={`h-[21px] overflow-hidden border-r border-[#363d47] pl-1 text-[11px] leading-[21px] whitespace-nowrap ${s.bus ? "bg-[#7d7e80] text-[#0b0c0d]" : "bg-[#fb1272] text-white"}`}>{s.name}</div>
    </article>
  );
}

function Mixer() {
  const side = "flex h-[21px] w-[17px] items-center justify-center rounded-sm border border-[#5f666f]";
  const g = `flex h-[19px] items-center ${DARKMETAL}`;
  return (
    <section className="mt-1 flex shrink-0 rounded-md border-2 border-[#4f5e70] bg-[#363d47] pt-[7px]">
      <div className="flex w-[30px] flex-col items-center border-r-2 border-[#4f5e70] pl-0 mb-2 text-[#dfe3e7]">
        <button aria-label="Racks" className={`${side} bg-[#2c3138]`}><Icon n="dots3" /></button>
        <div className="mt-[135px] flex flex-col gap-[5px]">
          <button aria-label="Faders" className={`${side} bg-white text-[#15171a]`}><Icon n="faders" /></button>
          <button aria-label="Inserts" className={`${side} bg-[#434a54]`}><Icon n="channel" /></button>
          <button aria-label="Sends" className={`${side} bg-[#434a54]`}><Icon n="monitor" /></button>
        </div>
      </div>
      <div className="flex min-w-0 flex-1 flex-col pr-[6px] pb-[14px] pl-2">
        <div className="flex items-center text-[10px] text-[#0e0f11]">
          <div className={`flex h-[19px] w-[38px] items-center justify-around ${METAL}`}>
            <button aria-label="Undo mix"><Icon n="undo" /></button>
            <button aria-label="Redo mix"><Icon n="redo" /></button>
          </div>
          <i className="ml-[6px] h-5 w-px bg-[#5f666f]" />
          <div className="ml-[336px] flex gap-[7px]">
            <button aria-label="Functions menu" className={`${g} w-5 justify-center`}><Icon n="list" /></button>
            <button aria-label="Find channel" className={`${g} w-[21px] justify-center`}><Icon n="search" className="size-[13px]" /></button>
            <div className={`${g} w-[121px] justify-between px-[5px]`}>
              <label htmlFor="link-group" className="pl-[2px]">Link</label>
              <span className="flex items-center border border-[#26282b]">
                <select id="link-group" className="h-[15px] w-[50px] appearance-none text-center"><option>-</option></select>
                <Icon n="down" className="size-[9px]" />
              </span>
              <Icon n="e" className="size-[11px] text-[#46484c]" />
            </div>
            <div className={`${g} w-[47px] justify-around`}><button>Sus</button><button>Abs</button></div>
            <button className={`${g} w-[51px] justify-center font-bold`}>Q-Link</button>
            <div className={`${g} w-[57px] justify-around font-bold`}><Icon n="outLeft" /><span>10</span><Icon n="inOut" /></div>
          </div>
          <div className="ml-auto flex gap-2">
            <button aria-label="Zones" className={`flex h-[19px] w-5 items-center justify-center ${METAL}`}><Icon n="bigDown" className="h-[6px] w-[9px]" /></button>
            <div className={`flex h-[19px] items-center ${METAL}`}>
              <button aria-label="Open in window" className="flex w-5 justify-center"><Icon n="ne" /></button>
              <Sep />
              <Icon n="down" className="size-[9px]" />
            </div>
            <button aria-label="Mixer setup" className={`flex h-[19px] w-3 items-center justify-center ${METAL}`}><Settings className="size-3" strokeWidth={3} /></button>
          </div>
        </div>
        <div className="mt-[6px] ml-[2px] grid w-[917px] grid-cols-8">
          {STRIPS.map((s) => (
            <ChannelStrip key={s.name} s={s} />
          ))}
        </div>
        <i className="mt-[7px] ml-2 block h-px bg-[#7b828b]" />
      </div>
    </section>
  );
}

const KNOBS: [string, string, boolean][] = [
  ["", "Volume", true], ["", "Pan", true], ["", "Mute", false], ["AUX", "1 Return", true], ["AUX", "2 Return", true], ["AUX", "3 Return", true],
];

function RightZone() {
  const b = `flex h-[18px] items-center justify-center ${DARKMETAL}`;
  return (
    <aside className="flex w-[284px] shrink-0 flex-col">
      <div className="flex h-5 shrink-0 items-end text-[10px] font-bold">
        <button className="relative -mb-[2px] h-[21px] w-[113px] rounded-t-md border-2 border-b-0 border-[#4f5e70] bg-[#363d47] text-[#dce6f0]">VST Instruments</button>
        <button className="h-5 pl-[17px] text-[#a6adb5]">MediaBay</button>
      </div>
      <div className="flex-1 rounded-r-md rounded-bl-md border-2 border-[#4f5e70] bg-[#363d47] px-[6px] pt-[6px]">
        <div className="flex">
          <button aria-label="Add instrument" className={`${b} w-7 gap-px`}><Icon n="keys" /><span className="text-[14px] font-bold leading-3">+</span></button>
          <button aria-label="Find instrument" className={`${b} ml-[5px] w-[19px]`}><Icon n="search" className="size-[13px]" /></button>
          <button aria-label="Previous" className={`${b} ml-auto w-[19px]`}><Icon n="arrowUp" className="size-[10px]" /></button>
          <button aria-label="Next" className={`${b} ml-px w-[18px]`}><Icon n="arrowDown" className="size-[10px]" /></button>
          <button aria-label="Show controls" className="ml-[5px] mr-px flex h-[18px] w-[18px] items-center justify-center bg-[#e6e8ea] text-black"><Icon n="dome" /></button>
          <button aria-label="Control options" className={`${b} mr-1 w-[9px]`}><Icon n="down" className="size-[9px]" /></button>
        </div>
        <div className="mt-[9px] flex h-[132px] rounded-[4px] border-2 border-[#a9abae] bg-gradient-to-b from-[#58595b] to-[#66686b]">
          <span className="w-[17px] border-r border-[#2f3032] pt-[5px] pl-1 text-[9px] text-[#d7d9db]">1</span>
          <div className="flex min-w-0 flex-1 flex-col px-1 pt-[3px]">
            <div className="rounded-md border-2 border-[#232324] bg-gradient-to-br from-[#363637] via-[#454546] to-[#3a3a3b] pt-[8px] pb-[5px] text-[#e4e6e8]">
              <div className="flex h-[14px] items-center pr-2 pl-[11px] text-[10px] font-bold">
                <button aria-label="Activate" className="flex size-[11px] items-center justify-center bg-[#dcdee0] text-[#1d1e20]"><Icon n="power" className="size-[10px]" /></button>
                <Icon n="e" className="ml-1 size-[10px] text-[#77797b]" />
                <Icon n="freeze" className="ml-1 size-[10px] text-[#77797b]" />
                <span className="ml-[25px] flex-1 text-[9px]">GrooveAgentSE</span>
                <span className="flex gap-2 text-[#88898b]"><Icon n="diamond" className="size-[10px]" /><Icon n="inIcon" className="size-[10px]" /><Icon n="outIcon" className="size-[10px]" /></span>
              </div>
              <div className="flex h-[18px] items-center pl-[13px] text-[8px] text-[#808284]">
                <span className="w-[14px]">R</span>
                <span className="w-[39px]">W</span>
                <span className="text-[9px] font-bold text-[#e4e6e8]">Ch. 1</span>
              </div>
              <div className="grid grid-cols-6 px-[8px] text-center text-[8px] leading-[13px] font-bold whitespace-nowrap">
                {KNOBS.map(([a, n]) => (
                  <div key={n}><div className="h-[13px]">{a}</div><div>{n}</div></div>
                ))}
              </div>
            </div>
            <div className="mt-3 grid grid-cols-6 justify-items-center px-[10px]">
              {KNOBS.map(([, n, on]) => (
                <svg key={n} viewBox="0 0 24 24" className="size-6" role="img" aria-label={`${n} knob`}>
                  <circle cx="12" cy="12" r="11" fill="#2b2b2c" />
                  <circle cx="12" cy="13" r="7" fill="#4c4d4f" />
                  <path d="M6 19a9 9 0 1112 0" fill="none" stroke="#161617" strokeWidth="2.500" />
                  {on && <path d="M6 19a9 9 0 016-16" fill="none" stroke="#b08d3c" strokeWidth="2" />}
                  <path d={on ? "M12 5v6" : "M7.500 17.500l4-4"} stroke="#dcdcdc" strokeWidth="2" />
                </svg>
              ))}
            </div>
          </div>
          <div className="flex w-[18px] flex-col items-center justify-between border-l border-[#2f3032] py-[3px] text-[#d7d9db]">
            <Icon n="dome" className="size-[10px]" />
            <Icon n="reload" className="size-[10px]" />
          </div>
        </div>
        <div className="flex h-[18px] items-center border-b border-[#5f666f] bg-[#414850] text-[10px] font-bold text-[#9aa3ac]">
          <Icon n="up" className="ml-[29px] mr-1 size-[8px]" />Track
          <span className="ml-auto mr-[6px]">Rack</span>
          <Icon n="bigDown" className="mr-[27px] size-[8px]" />
        </div>
      </div>
    </aside>
  );
}

const ROWS: { pad: string; kind: "tri" | "pin"; name: string; hi?: boolean; spk?: string; dev?: string; port?: string; color?: string; top?: boolean }[] = [
  { pad: "pl-1", kind: "tri", name: "Lexicon MPX 500", hi: true, spk: "Stereo/Stereo", top: true },
  { pad: "pl-[21px]", kind: "tri", name: "Send Bus 1", spk: "Stereo", dev: "Steinberg UR44" },
  { pad: "pl-[52px]", kind: "pin", name: "Left", port: "UR44 Mix 2 L", color: "bg-[#93f0fb]" },
  { pad: "pl-[52px]", kind: "pin", name: "Right", port: "UR44 Mix 2 R", color: "bg-[#93f0fb]" },
  { pad: "pl-[21px]", kind: "tri", name: "Return Bus 1", hi: true, spk: "Stereo", dev: "Steinberg UR44" },
  { pad: "pl-[52px]", kind: "pin", name: "Left", port: "UR44 Input 5", color: "bg-[#fbeb9c]" },
  { pad: "pl-[52px]", kind: "pin", name: "Right", hi: true, port: "UR44 Input 6", color: "bg-[#fbeb9c]" },
];
const COLS: [string, string][] = [
  ["Bus Name", "w-[97px]"], ["Speakers", "w-[69px]"], ["Audio Device", "w-[111px]"], ["Device Port", "w-[111px]"],
  ["Delay", "w-[86px]"], ["Send Gain", "w-[68px]"], ["Return Gain", "w-[69px]"], ["MIDI Device", "w-[47px]"],
];
const TABS = ["Inputs", "Outputs", "Group/FX", "External FX", "External Instruments", "Studio"];

function Connections() {
  const [tab, setTab] = useState("External FX");
  const td = "h-[14px] border-r border-b border-[#a3a5a8] p-0 pl-[3px] whitespace-nowrap";
  return (
    <div role="dialog" aria-label="VST Connections - External FX" className="absolute top-[103px] left-[326px] z-20 w-[702px] rounded-t-md rounded-b-md bg-[#e9e8ea] text-[#1a1a1a] shadow-[0_4px_14px_#000a]">
      <div className="relative flex h-[19px] items-center justify-center rounded-t-md border-b border-[#b9b9ba] bg-gradient-to-b from-[#e9e9ea] to-[#d1d1d2] font-[Inter] text-[11px] text-[#3a3a3b]">
        <div className="absolute left-[7px] flex gap-[7px]">
          <i className="size-[10px] rounded-full bg-[#fc5650]" />
          <i className="size-[10px] rounded-full bg-[#fdb225]" />
          <i className="size-[10px] rounded-full bg-[#22c033]" />
        </div>
        VST Connections - External FX
      </div>
      <div className="px-1 pt-[15px] pb-[6px]">
        <div role="tablist" className="relative grid h-[17px] grid-cols-6 overflow-hidden rounded-[4px] bg-white text-[10px] ring-1 ring-[#d5d5d7]">
          {TABS.map((t) => (
            <button key={t} role="tab" aria-selected={t === tab} onClick={() => setTab(t)} className={t === tab ? "bg-gradient-to-b from-[#5aaafb] to-[#0f6dfb] font-bold text-[#06122c]" : "border-r border-[#e1e1e3]"}>{t}</button>
          ))}
        </div>
        <div className="mx-[3px] -mt-2 bg-[#dfdfe0] px-2 pt-[21px] pb-[6px]">
          <div className="flex items-center text-[10px]">
            <div className="flex w-[61px] items-center gap-[3px] pl-[7px]">
              <svg viewBox="0 0 18 8" className="h-2 w-[18px]" fill="none" stroke="#222" aria-hidden="true"><path d="M.5.5h7v7h-7zM10.500.5h7v7h-7zM2 4h4M4 2v4M12 4h4" /></svg>
              All
            </div>
            <button className="h-[15px] w-[154px] border border-[#b2b2b4] bg-[#ececee] leading-[13px]">Add External FX</button>
            <button className="ml-[6px] h-[15px] w-[154px] border border-[#b2b2b4] bg-[#ececee] leading-[13px]">Favorites</button>
          </div>
          <div className="mt-[7px] flex w-[673px] border-2 border-[#55575a] bg-[linear-gradient(to_bottom,#919397_14px,transparent_14px)]">
            <table className="h-[249px] w-[658px] table-fixed border-collapse text-left text-[9px]">
              <thead>
                <tr>
                  {COLS.map(([c, w], i) => (
                    <th key={c} className={`h-[14px] ${i < 7 ? "border-r" : ""} border-[#6b6d70] p-0 pl-1 font-medium whitespace-nowrap ${w}`}>{c}</th>
                  ))}
                </tr>
              </thead>
              <tbody className="bg-white">
                {ROWS.map((r, i) => (
                  <tr key={i}>
                    <td className={`${td} pl-0`}>
                      <div className={`flex h-[13px] items-center ${r.pad}`}>
                        {r.kind === "tri" ? (
                          <svg viewBox="0 0 10 9" className="mr-1 h-2 w-[9px] shrink-0" fill="none" stroke="#6b6d70" aria-hidden="true"><path d="M1 1h8L5 8z" /></svg>
                        ) : (
                          <svg viewBox="0 0 12 7" className="mr-1 h-[7px] w-3 shrink-0" fill="none" stroke="#55575a" aria-hidden="true"><path d="M0 3.500h7" /><circle cx="9" cy="3.500" r="2" /></svg>
                        )}
                        <span className={`px-[2px] leading-[13px] ${r.hi ? "bg-[#606266] text-white" : ""}`}>{r.name}</span>
                      </div>
                    </td>
                    <td className={`${td} text-[#6d6f72]`}>{r.spk}</td>
                    <td className={td}>{r.dev}</td>
                    <td className={`${td} ${r.color ?? ""}`}>{r.port}</td>
                    {["0.00 ms (0)", "0.00 dB", "0.00 dB", "No Link"].map((v, k) => (
                      <td key={k} className={`${td} ${r.top ? "bg-[#dededf]" : ""}`}>{r.top ? v : ""}</td>
                    ))}
                  </tr>
                ))}
                <tr>
                  {COLS.map(([c]) => (
                    <td key={c} className="border-r border-[#a3a5a8]" />
                  ))}
                </tr>
              </tbody>
            </table>
            <div className="mt-[14px] flex flex-1 flex-col justify-between border-l border-[#55575a] bg-[repeating-linear-gradient(to_bottom,#97999b_0,#97999b_13px,#85878a_13px,#85878a_14px)]">
              <button aria-label="Scroll up" className="flex h-[13px] items-center justify-center bg-[#a7a9ac]"><svg viewBox="0 0 8 5" className="h-[5px] w-2" fill="none" stroke="#222" strokeWidth="1.500"><path d="M.5 4.500L4 1l3.500 3.500" /></svg></button>
              <button aria-label="Scroll down" className="flex h-[13px] items-center justify-center bg-[#a7a9ac]"><svg viewBox="0 0 8 5" className="h-[5px] w-2" fill="none" stroke="#222" strokeWidth="1.500"><path d="M.5.5L4 4 7.500.5" /></svg></button>
            </div>
          </div>
          <div className="-mt-px flex h-[13px] w-[660px] border border-t-0 border-[#55575a] bg-[repeating-linear-gradient(to_right,#97999b_0,#97999b_13px,#85878a_13px,#85878a_14px)]">
            <button aria-label="Scroll left" className="flex w-[14px] items-center justify-center bg-[#a7a9ac]"><svg viewBox="0 0 5 8" className="h-2 w-[5px]" fill="none" stroke="#222" strokeWidth="1.500"><path d="M4.500.5L1 4l3.500 3.500" /></svg></button>
            <i className="w-[571px] border border-[#3c3e41] bg-gradient-to-b from-[#75777a] to-[#505255]" />
            <button aria-label="Scroll right" className="ml-auto flex w-[13px] items-center justify-center bg-[#a7a9ac]"><svg viewBox="0 0 5 8" className="h-2 w-[5px]" fill="none" stroke="#222" strokeWidth="1.500"><path d="M.5.5L4 4 .5 7.500" /></svg></button>
          </div>
        </div>
      </div>
      <svg viewBox="0 0 10 15" className="absolute top-[143px] left-[75px] h-[15px] w-[10px]" aria-hidden="true">
        <path d="M1 1v11l2.500-2.300L5.300 14l2-.9-1.800-4H9z" fill="#000" stroke="#fff" strokeWidth="0.600" />
      </svg>
    </div>
  );
}

function LowerTabs() {
  return (
    <div className="flex h-[18px] shrink-0 items-start text-[10px] font-bold text-[#a6adb5]">
      <button aria-label="Close lower zone" className="flex h-[18px] w-[17px] items-center justify-center pr-px"><Icon n="mute" className="size-[9px]" /></button>
      <button className="relative -mt-[2px] h-5 w-[87px] rounded-b-md border-2 border-t-0 border-[#4f5e70] bg-[#363d47] text-[#dce6f0]">MixConsole</button>
      <button className="ml-[17px] h-[18px]">Editor</button>
      <Icon n="bigDown" className="mt-[7px] ml-5 size-[7px]" />
      <button className="ml-[20px] h-[18px]">Sampler Control</button>
      <button className="ml-[30px] h-[18px]">Chord Pads</button>
      <Settings className="mt-[4px] ml-5 size-[11px]" strokeWidth={3} />
    </div>
  );
}

const Grip = () => <i className="h-5 w-px shrink-0 border-l-2 border-dotted border-[#5f6266]" />;

function Transport() {
  const frame = "flex h-7 shrink-0 items-stretch gap-px rounded-[4px] border-2 border-[#6a6d71] bg-[#2c2e31] p-px";
  const key = "flex items-center justify-center bg-gradient-to-b from-[#9fa3a9] to-[#858990] text-[#1b1c1e]";
  const lcd = "flex h-7 shrink-0 items-center justify-end bg-black font-bold text-[#cfd3d7]";
  const group = `flex h-[22px] shrink-0 items-stretch ${METAL}`;
  return (
    <footer className="flex h-9 shrink-0 items-center bg-[#27292d] pl-[5px] pr-[7px]">
      <div className={group}><Tool n="meterClock" label="Performance" /></div>
      <div className={`${group} ml-[7px]`}><Tool n="dot" label="Record mode" /><Sep /><Icon n="corner" className="size-[8px] self-end" /></div>
      <span className="mx-[3px]"><Grip /></span>
      <div className={group}><Tool n="wedge" on label="Punch" /><Sep /><Icon n="corner" className="size-[8px] self-end" /></div>
      <span className="mx-[3px]"><Grip /></span>
      <div className={`${group} ml-px`}>
        <Tool n="stretch" on label="MIDI merge" />
        <button className="w-[22px] text-[11px]">AQ</button>
        <Sep />
        <Icon n="corner" className="size-[8px] self-end" />
      </div>
      <span className="ml-1"><Grip /></span>
      <div className="ml-[220px] flex h-7 w-[132px] shrink-0 flex-col rounded-[3px] border-2 border-[#6a6d71] bg-black p-[2px]">
        <div className="flex flex-1 justify-between border-b border-[#44474b] bg-[#151617]"><i className="w-1 bg-[#4a9a70]" /><i className="w-[3px] bg-[#e0403e]" /></div>
        <div className="h-[7px] bg-[#101112]" />
      </div>
      <div className={`${frame} ml-[11px] w-5`}><button aria-label="Left locator" className="flex flex-1 items-center justify-center bg-[#505357]"><Icon n="locL" className="size-[11px]" /></button></div>
      <div className={`${lcd} w-[91px] pr-1 text-[13px] font-medium`}><span className="whitespace-pre">1.  1.  1.   0</span></div>
      <div className={`${frame} ml-[5px] w-5`}><button aria-label="Right locator" className="flex flex-1 items-center justify-center bg-[#505357]"><Icon n="locR" className="size-[11px]" /></button></div>
      <div className={`${lcd} w-[91px] pr-1 text-[13px] font-medium`}><span className="whitespace-pre">9.  1.  1.   0</span></div>
      <div className={`${frame} ml-1 w-[39px]`}>
        <button aria-label="Punch in" className="flex flex-1 items-center justify-center bg-[#606368]"><Icon n="punchA" /></button>
        <button aria-label="Punch out" className="flex flex-1 items-center justify-center bg-[#606368]"><Icon n="punchB" /></button>
      </div>
      <span className="mx-[3px]"><Grip /></span>
      <div className={`${frame} w-[233px]`}>
        <button aria-label="Previous marker" className={`${key} w-4`}><Icon n="prev" /></button>
        <button aria-label="Next marker" className={`${key} w-4`}><Icon n="next" className="size-[11px]" /></button>
        <button aria-label="Rewind" className={`${key} flex-1`}><Icon n="rew" className="size-[15px]" /></button>
        <button aria-label="Forward" className={`${key} flex-1`}><Icon n="ffw" className="size-[15px]" /></button>
        <button aria-label="Cycle" className="flex flex-1 items-center justify-center bg-gradient-to-b from-[#7669dd] to-[#5b4fc4] text-[#14123a]"><Icon n="cycle" className="size-[14px]" /></button>
        <button aria-label="Stop" className="flex flex-1 items-center justify-center bg-[#dfe2e8] text-[#1b1c1e]"><Icon n="stop" className="size-[10px]" /></button>
        <button aria-label="Play" className={`${key} flex-1`}><Icon n="right" /></button>
        <button aria-label="Record" className={`${key} flex-1`}><Icon n="dot" /></button>
      </div>
      <span className="mr-1 ml-[4px]"><Grip /></span>
      <div className={`${lcd} w-[135px] justify-between pr-[6px] pl-1 text-[15px]`}><Icon n="noteFill" className="size-4 text-[#5d6064]" /><span className="whitespace-pre">4.  1.  1.  58</span></div>
      <span className="mx-[3px]"><Grip /></span>
      <div className={`${frame} w-[19px]`}><button aria-label="Tempo track" className="flex flex-1 items-center justify-center bg-[#d5d8dc] text-black"><Icon n="tempo" className="size-[11px]" /></button></div>
      <div className={`${lcd} w-[57px] pr-[7px] text-[11px]`}>96.000</div>
      <span className="mr-[3px] ml-1"><Grip /></span>
      <div className={`${frame} w-[58px]`}>
        {["clickA", "clickB", "clickC"].map((n) => (
          <button key={n} aria-label={n} className="flex flex-1 items-center justify-center bg-[#606368] text-[#1b1c1e]"><Icon n={n} /></button>
        ))}
      </div>
      <span className="ml-[3px]"><Grip /></span>
      <i className="ml-auto h-5 w-px bg-[#4c4f53]" />
      <div className="ml-[7px] flex h-7 w-[65px] shrink-0 rounded-md bg-black">
        <i className="ml-4 h-full w-px bg-[#222]" />
        <svg viewBox="0 0 48 28" className="flex-1" aria-hidden="true"><path d="M26 6.500h14" stroke="#5c7a6a" strokeDasharray="6 1" strokeWidth="1.500" /><path d="M18 24.500h6" stroke="#1c9bb5" strokeWidth="1.500" /></svg>
      </div>
      <span className="mr-[3px] ml-1"><Grip /></span>
      <button aria-label="Transport setup" className={`flex h-5 w-3 items-center justify-center ${METAL}`}><Settings className="size-3" strokeWidth={3} /></button>
    </footer>
  );
}

export default function App() {
  return (
    <div className="relative flex h-screen min-h-[860px] min-w-[1500px] flex-col overflow-hidden bg-[#151516] font-['Liberation_Sans',Arial,sans-serif]">
      <header className="relative flex h-[18px] shrink-0 items-center justify-center gap-[6px] bg-[#f5f4f6] font-[Inter] text-[11px] text-[#9a9a9c]">
        <div className="absolute left-[6px] flex gap-[7px]">
          {[0, 1, 2].map((i) => (
            <i key={i} className="size-[10px] rounded-full bg-[#dcdbdd]" />
          ))}
        </div>
        <svg viewBox="0 0 10 12" className="h-3 w-[9px]" aria-hidden="true"><path d="M8 1L2 5.500 8 11" fill="none" stroke="#b9546a" strokeWidth="1.500" strokeDasharray="2.500 1" /><path d="M5.500 3.500L8 6 5.500 8.500 3.500 6z" fill="#c0334f" /></svg>
        Cubase Pro Project - external effects
      </header>
      <Toolbar />
      <InfoBar />
      <div className="flex h-[38px] shrink-0 items-center pb-1 pl-[6px] text-[10px] text-[#a2a5a8]">No Object Selected</div>
      <main className="flex min-h-0 flex-1 gap-1 pr-[5px] pb-1 pl-[3px]">
        <Inspector />
        <div className="flex min-w-0 flex-1 flex-col">
          <Arrange />
          <Mixer />
          <LowerTabs />
        </div>
        <RightZone />
      </main>
      <Transport />
      <div className="h-[3px] shrink-0 bg-[linear-gradient(to_right,#1c1512,#231815_45%,#151b24_65%,#7a3b1c_78%,#4a2616_85%,#161a24)]" />
      <Connections />
      <svg viewBox="0 0 14 34" className="absolute right-0 bottom-[22px] h-[34px] w-[14px]" fill="none" stroke="#a5a8ab" strokeWidth="3" aria-hidden="true"><path d="M14 3C10 6 6 11 2 16c4 5 8 10 12 13" strokeOpacity="0.600" /></svg>
    </div>
  );
}
